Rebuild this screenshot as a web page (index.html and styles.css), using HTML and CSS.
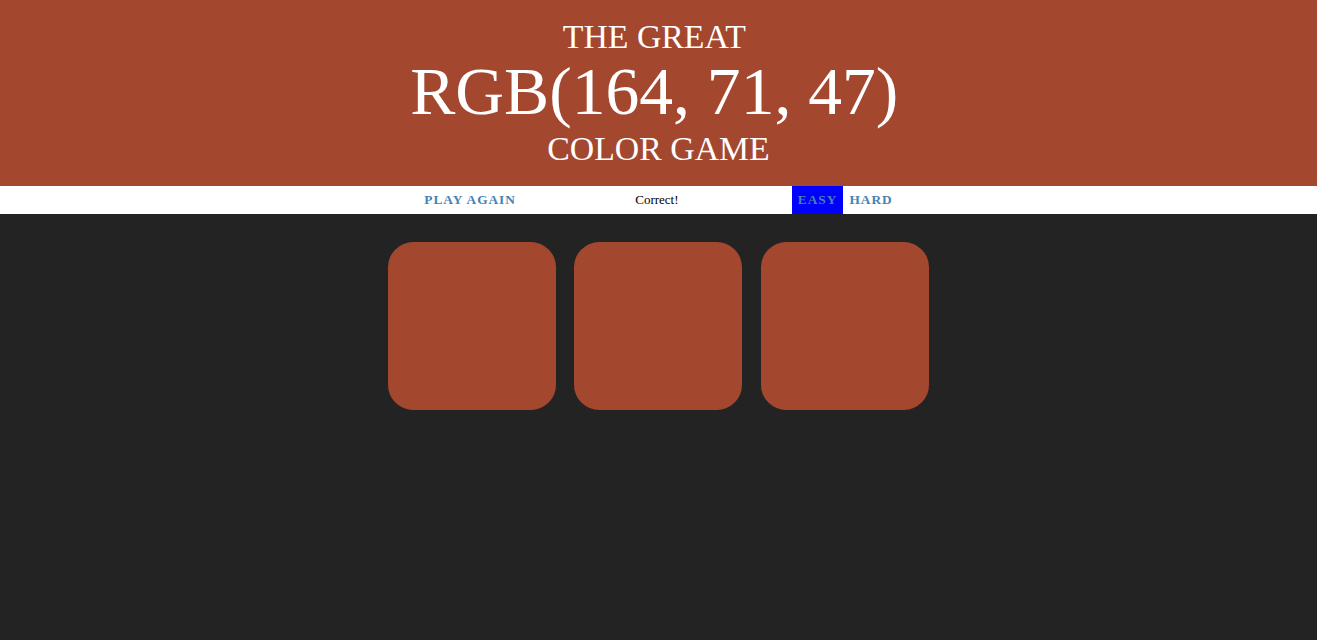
FILE: index.html
```html
<!DOCTYPE html>
<html>
<head>
<meta charset="utf-8">
<title>Color Game</title>
<link rel="stylesheet" href="styles.css">
</head>
<body>
<h1 class="title">The Great&nbsp;<br><span class="color-display">RGB(164, 71, 47)</span>&nbsp;<br>Color Game</h1>
<div class="stripe">
  <button class="btn">Play Again</button>
  <span class="message">Correct!</span>
  <button class="btn selected">Easy</button><button class="btn">Hard</button>
</div>
<div class="container">
  <div class="square"></div>
  <div class="square"></div>
  <div class="square"></div>
</div>
</body>
</html>
```
FILE: styles.css
```css
body {
  background-color: #232323;
  margin: 0;
  font-family: "Liberation Serif", "Times New Roman", serif;
}
.title {
  text-align: center;
  line-height: 1.1;
  font-weight: normal;
  font-size: 33.8px;
  color: white;
  background: rgb(164, 71, 47);
  margin: 0;
  text-transform: uppercase;
  padding: 18px 0 19px;
}
.color-display {
  font-size: 200%;
}
.stripe {
  background: white;
  height: 28px;
  text-align: center;
  color: black;
  font-size: 13px;
}
.message {
  display: inline-block;
  width: 20%;
}
.btn {
  border: none;
  background: none;
  text-transform: uppercase;
  height: 100%;
  font-family: inherit;
  font-size: 13.333px;
  font-weight: 700;
  color: steelblue;
  letter-spacing: 1px;
  padding: 1px 6px;
  outline: none;
}
.selected {
  background: blue;
}
.container {
  margin: 19px auto;
  max-width: 560px;
  display: flex;
  flex-wrap: wrap;
}
.square {
  width: 30%;
  padding-bottom: 30%;
  margin: 1.66%;
  background: rgb(164, 71, 47);
  border-radius: 15%;
}
```
